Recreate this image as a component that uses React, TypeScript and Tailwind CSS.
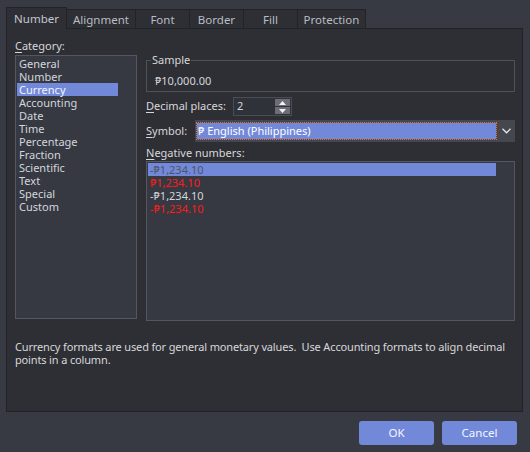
import React from "react";

const font = { fontFamily: '"Noto Sans", "DejaVu Sans", sans-serif' };

function Tab({ label }: { label: string }) {
  return (
    <div className="h-[22px] w-[61px] -mb-px relative z-10 bg-[#2e2f34] border border-b-0 border-[#222327] flex items-center justify-center text-[11.5px] text-[#c3c6cc]">
      {label}
    </div>
  );
}

function InTab({ label, w }: { label: string; w: string }) {
  return (
    <div className={`h-[19px] ${w} bg-[#2e2f34] border border-b-0 border-l-0 border-[#222327] flex items-center justify-center pt-[1px] text-[11.5px] text-[#b9bdc5]`}>
      {label}
    </div>
  );
}

const categories = [
  "General",
  "Number",
  "Currency",
  "Accounting",
  "Date",
  "Time",
  "Percentage",
  "Fraction",
  "Scientific",
  "Text",
  "Special",
  "Custom",
];

export default function App() {
  return (
    <div
      className="w-[530px] h-[452px] bg-[#373a43] pt-[7px] pl-[6px] pr-[7px] flex flex-col"
      style={font}
    >
      {/* Tabs */}
      <div className="flex items-end h-[21px]">
        <Tab label="Number" />
        <InTab label="Alignment" w="w-[69px]" />
        <InTab label="Font" w="w-[54px]" />
        <InTab label="Border" w="w-[54px]" />
        <InTab label="Fill" w="w-[54px]" />
        <InTab label="Protection" w="w-[68px]" />
      </div>
      {/* Panel */}
      <div className="h-[384px] w-[517px] border border-[#222327] bg-[#2e2f34] flex flex-col">
        <div className="flex pl-[8px] pt-[9px]">
          {/* Left column */}
          <div className="flex flex-col w-[122px]">
            <div className="h-[16px] text-[11px] leading-[16px] text-[#d6d7da]">
              <span className="underline underline-offset-2">C</span>ategory:
            </div>
            <div className="mt-[1px] h-[264px] border border-[#55575e] bg-[#363941] pt-[1px] pl-[1px]">
              {categories.map((c) => (
                <div
                  key={c}
                  className={`h-[13px] w-[101px] pl-[2px] text-[11px] leading-[13px] ${
                    c === "Currency" ? "bg-[#7289da] text-[#f2f4ff]" : "text-[#d3d6dc]"
                  }`}
                >
                  {c}
                </div>
              ))}
            </div>
          </div>
          {/* Right column */}
          <div className="ml-[9px] w-[369px] flex flex-col">
            <div className="relative mt-[22px] h-[32px] border border-[#4f5157]">
              <div className="absolute -top-[8px] left-[4px] px-[1px] bg-[#2e2f34] text-[11px] leading-[14px] text-[#d6d7da]">
                Sample
              </div>
              <div className="pl-[8px] pt-[13px] text-[11px] leading-[13px] text-[#d3d6dc]">₱10,000.00</div>
            </div>
            <div className="mt-[5px] flex items-center h-[19px]">
              <div className="w-[87px] text-[11px] text-[#d6d7da]">
                <span className="underline underline-offset-2">D</span>ecimal places:
              </div>
              <div className="w-[59px] h-[19px] border border-[#4b4d54] bg-[#30323a] flex items-center justify-between pl-[3px] pr-[1px]">
                <span className="text-[11px] text-[#d3d6dc]">2</span>
                <div className="flex flex-col gap-[1px]">
                  <div className="w-[15px] h-[7px] bg-[#6b6e76] flex items-center justify-center">
                    <svg width="7" height="4" viewBox="0 0 7 4"><path d="M3.5 0 L7 4 L0 4 Z" fill="#f2f2f2" /></svg>
                  </div>
                  <div className="w-[15px] h-[7px] bg-[#6b6e76] flex items-center justify-center">
                    <svg width="7" height="4" viewBox="0 0 7 4"><path d="M0 0 L7 0 L3.5 4 Z" fill="#f2f2f2" /></svg>
                  </div>
                </div>
              </div>
            </div>
            <div className="mt-[4px] flex items-center h-[22px]">
              <div className="w-[49px] text-[11px] text-[#d6d7da]">
                <span className="underline underline-offset-2">S</span>ymbol:
              </div>
              <div className="w-[320px] h-[22px] bg-[#45474e] flex items-center">
                <div className="ml-[1px] w-[301px] h-[18px] bg-[#7289da] bg-clip-padding border border-dotted border-[#f06a2a] flex items-center pl-[1px] text-[11px] text-white">
                  ₱ English (Philippines)
                </div>
                <div className="flex-1 flex items-center justify-center">
                  <svg width="9" height="6" viewBox="0 0 9 6">
                    <path d="M0.5 0.8 L4.5 4.8 L8.5 0.8" stroke="#e6e6e6" strokeWidth="1.3" fill="none" />
                  </svg>
                </div>
              </div>
            </div>
            <div className="mt-[3px] h-[16px] text-[11px] leading-[16px] text-[#d6d7da]">
              <span className="underline underline-offset-2">N</span>egative numbers:
            </div>
            <div className="h-[160px] border border-[#55575e] bg-[#363941] pt-[1px] pl-[1px]">
              <div className="h-[13px] w-[348px] pl-[2px] text-[11px] leading-[13px] bg-[#7289da] text-[#4d5466]">-₱1,234.10</div>
              <div className="h-[13px] pl-[2px] text-[11px] leading-[13px] text-[#ff1a1a]">₱1,234.10</div>
              <div className="h-[13px] pl-[2px] text-[11px] leading-[13px] text-[#d3d6dc]">-₱1,234.10</div>
              <div className="h-[13px] pl-[2px] text-[11px] leading-[13px] text-[#ff1a1a]">-₱1,234.10</div>
            </div>
          </div>
        </div>
        <div className="mt-[19px] pl-[8px] pr-[4px] text-[11px] leading-[13px] tracking-[-0.15px] text-[#d6d7da]">
          Currency formats are used for general monetary values.&nbsp; Use Accounting formats to align decimal points in a column.
        </div>
      </div>
      {/* Buttons */}
      <div className="mt-[9px] flex justify-end gap-[8px] pr-[6px]">
        <button className="w-[75px] h-[24px] rounded-[3px] bg-[#7289da] text-[11.5px] text-[#f4f6ff]">OK</button>
        <button className="w-[75px] h-[24px] rounded-[3px] bg-[#7289da] text-[11.5px] text-[#f4f6ff]">Cancel</button>
      </div>
    </div>
  );
}
